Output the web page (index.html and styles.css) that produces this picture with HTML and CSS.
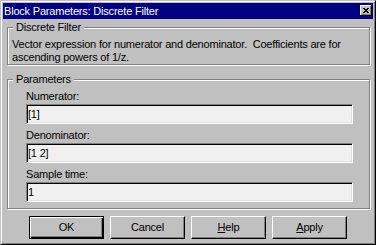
FILE: index.html
```html
<!DOCTYPE html>
<html>
<head>
<meta charset="utf-8">
<link rel="stylesheet" href="styles.css">
</head>
<body>
<div class="window">
  <div class="titlebar">
    <span class="title">Block Parameters: Discrete Filter</span>
    <span class="close"><svg width="6" height="5" viewBox="0 0 6 5" shape-rendering="crispEdges"><path d="M0 0h2v1H0zM4 0h2v1H4zM1 1h4v1H1zM2 2h2v1H2zM1 3h4v1H1zM0 4h2v1H0zM4 4h2v1H4z" fill="#000"/></svg></span>
  </div>
  <fieldset class="group desc">
    <legend>Discrete Filter</legend>
    <p class="text">Vector expression for numerator and denominator.&nbsp; Coefficients are for<br>ascending powers of 1/z.</p>
  </fieldset>
  <fieldset class="group params">
    <legend>Parameters</legend>
    <div class="fields">
      <div class="field"><div class="label">Numerator:</div><div class="input">[1]</div></div>
      <div class="field"><div class="label">Denominator:</div><div class="input">[1 2]</div></div>
      <div class="field"><div class="label">Sample time:</div><div class="input">1</div></div>
    </div>
  </fieldset>
  <div class="buttons">
    <div class="btn default">OK</div>
    <div class="btn">Cancel</div>
    <div class="btn"><u>H</u>elp</div>
    <div class="btn"><u>A</u>pply</div>
  </div>
</div>
</body>
</html>
```
FILE: styles.css
```css
html, body {
  margin: 0;
  padding: 0;
  background: #c0c0c0;
}
body {
  font-family: "Liberation Sans", Arial, sans-serif;
  font-size: 11px;
  line-height: 13px;
  letter-spacing: -0.2px;
  color: #000;
}
.window {
  width: 376px;
  height: 245px;
  box-sizing: border-box;
  border: 1px solid;
  border-color: #c0c0c0 #000 #000 #c0c0c0;
  box-shadow: inset 1px 1px #fff, inset -1px -1px #808080;
  padding: 2px;
  background: #c0c0c0;
  display: flex;
  flex-direction: column;
}
.titlebar {
  height: 16px;
  flex: none;
  background: #000080;
  color: #fff;
  display: flex;
  justify-content: space-between;
  align-items: flex-start;
  padding: 0 1px 0 1px;
}
.title {
  line-height: 16px;
}
.close {
  width: 12px;
  height: 11px;
  box-sizing: border-box;
  margin-top: 2px;
  background: #c0c0c0;
  box-shadow: inset -1px -1px #000, inset 1px 1px #fff, inset -2px -2px #808080;
  display: flex;
  align-items: center;
  justify-content: center;
  padding: 0 1px 1px 0;
}
.close svg {
  display: block;
}
.group {
  margin: 2px 3px 0 4px;
  border: 1px solid #808080;
  box-shadow: inset 1px 1px #fff, 1px 1px #fff;
  padding: 0 4px;
  min-width: 0;
}
.group legend {
  margin-left: 1px;
  padding: 0 3px;
  background: #c0c0c0;
  line-height: 13px;
}
.desc {
  padding-top: 4px;
}
.text {
  margin: 0;
}
.params {
  margin-top: 8px;
  padding-top: 4px;
  padding-bottom: 6px;
}
.fields {
  padding: 0 12px 0 14px;
  display: flex;
  flex-direction: column;
  gap: 5px;
}
.label {
  line-height: 13px;
}
.input {
  margin-top: 1px;
  height: 20px;
  box-sizing: border-box;
  background: #f0f0f0;
  border: 1px solid;
  border-color: #808080 #fff #fff #808080;
  box-shadow: inset 1px 1px #000, inset -1px -1px #dfdfdf;
  padding-left: 1px;
  line-height: 18px;
}
.buttons {
  margin-top: 7px;
  display: flex;
  justify-content: center;
  gap: 6px;
}
.btn {
  width: 75px;
  height: 23px;
  box-sizing: border-box;
  border: 1px solid;
  border-color: #fff #000 #000 #fff;
  box-shadow: inset -1px -1px #808080;
  display: flex;
  align-items: center;
  justify-content: center;
}
.btn.default {
  border-color: #000;
  box-shadow: inset 1px 1px #fff, inset -1px -1px #000, inset -2px -2px #808080;
}
.btn u {
  text-decoration: underline;
}
```
